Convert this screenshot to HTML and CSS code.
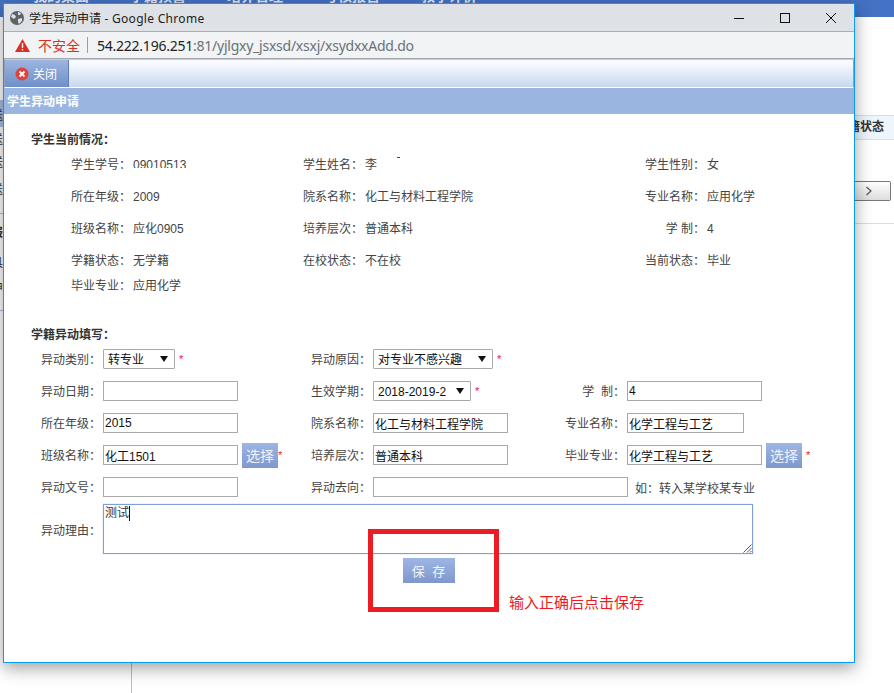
FILE: index.html
```html
<!DOCTYPE html>
<html lang="zh">
<head>
<meta charset="utf-8">
<title>学生异动申请</title>
<link rel="stylesheet" href="styles.css">
</head>
<body>
<div class="bg">
  <div class="bg-nav"><span>我的桌面</span><span>学籍预警</span><span>培养管理</span><span>考核报告</span><span>教学评价</span></div>
  <div class="bg-side"><b class="blk"></b><b class="ln1"></b><b class="ln2"></b><i class="s1">送</i><i class="s2">送</i><i class="s3">送</i><i class="s4">送</i><i class="s5">报</i><i class="s6">具</i><i class="s7">申</i></div>
  <div class="bg-head">籍状态</div>
  <div class="bg-pager"><svg width="8" height="10" viewBox="0 0 8 10"><path d="M1.500 1l4.500 4-4.500 4" fill="none" stroke="#555" stroke-width="1.200"/></svg></div>
  <div class="bg-line"></div>
</div>
<div class="win">
  <div class="title">
    <svg class="globe" width="16" height="16" viewBox="0 0 16 16"><circle cx="8" cy="8" r="7" fill="#5f6368"/><path d="M3 4l3 1 1 2-2 2-3-2zM9 2l3 1-1 2-2 0zM9 9l4-1 0 3-3 3-1-2z" fill="#dee1e6"/></svg>
    <span class="title-text">学生异动申请<span class="title-latin"> - Google Chrome</span></span>
    <svg class="winbtn" width="102" height="16" viewBox="0 0 102 16"><path d="M0 8.500h10" stroke="#111" fill="none"/><rect x="46.500" y="3.500" width="9" height="9" fill="none" stroke="#111"/><path d="M92 3l10 10M102 3L92 13" stroke="#111" fill="none"/></svg>
  </div>
  <div class="addr">
    <svg width="15" height="13" viewBox="0 0 15 13"><path d="M7.500 0L15 13H0z" fill="#d93025"/><path d="M6.800 4h1.400v5H6.800zM6.800 10h1.400v1.500H6.800z" fill="#fff"/></svg>
    <span class="unsafe">不安全</span><span class="sep"></span>
    <span class="url"><b>54.222.196.251</b>:81/yjlgxy_jsxsd/xsxj/xsydxxAdd.do</span>
  </div>
  <div class="toolbar">
    <div class="close-tab">
      <svg width="14" height="14" viewBox="0 0 14 14"><circle cx="7" cy="7" r="6.500" fill="#e2403a"/><path d="M4.500 4.500l5 5M9.500 4.500l-5 5" stroke="#fff" stroke-width="1.800"/></svg>
      <span>关闭</span>
    </div>
  </div>
  <div class="heading">学生异动申请</div>
  <div class="content">
    <div class="sec-title first">学生当前情况：</div>
    <div class="info">
      <div class="cell"><label>学生学号：</label><span class="clip">09010513</span></div>
      <div class="cell"><label>学生姓名：</label><span class="name">李<i class="mark"></i></span></div>
      <div class="cell"><label>学生性别：</label><span>女</span></div>
      <div class="cell"><label>所在年级：</label><span>2009</span></div>
      <div class="cell"><label>院系名称：</label><span>化工与材料工程学院</span></div>
      <div class="cell"><label>专业名称：</label><span>应用化学</span></div>
      <div class="cell"><label>班级名称：</label><span>应化0905</span></div>
      <div class="cell"><label>培养层次：</label><span>普通本科</span></div>
      <div class="cell"><label class="ra">学 制：</label><span>4</span></div>
      <div class="cell"><label>学籍状态：</label><span>无学籍</span></div>
      <div class="cell"><label>在校状态：</label><span>不在校</span></div>
      <div class="cell"><label>当前状态：</label><span>毕业</span></div>
    </div>
    <div class="cell last"><label>毕业专业：</label><span>应用化学</span></div>

    <div class="sec-title second">学籍异动填写：</div>
    <div class="form">
      <label>异动类别：</label>
      <div class="fld"><span class="sel w72">转专业<i></i></span><em>*</em></div>
      <label>异动原因：</label>
      <div class="fld"><span class="sel w120">对专业不感兴趣<i></i></span><em>*</em></div>
      <label></label><div class="fld"></div>

      <label>异动日期：</label>
      <div class="fld"><input class="inp" type="text" value=""></div>
      <label>生效学期：</label>
      <div class="fld"><span class="sel w98">2018-2019-2<i></i></span><em>*</em></div>
      <label>学&nbsp;&nbsp;制：</label>
      <div class="fld"><input class="inp" type="text" value="4"></div>

      <label>所在年级：</label>
      <div class="fld"><input class="inp" type="text" value="2015"></div>
      <label>院系名称：</label>
      <div class="fld"><input class="inp" type="text" value="化工与材料工程学院"></div>
      <label>专业名称：</label>
      <div class="fld"><input class="inp short" type="text" value="化学工程与工艺"></div>

      <label>班级名称：</label>
      <div class="fld"><input class="inp" type="text" value="化工1501"><button class="pick" type="button">选择</button><em class="tight">*</em></div>
      <label>培养层次：</label>
      <div class="fld"><input class="inp" type="text" value="普通本科"></div>
      <label>毕业专业：</label>
      <div class="fld"><input class="inp" type="text" value="化学工程与工艺"><button class="pick" type="button">选择</button><em>*</em></div>

      <label>异动文号：</label>
      <div class="fld"><input class="inp" type="text" value=""></div>
      <label>异动去向：</label>
      <div class="fld span3"><input class="inp wide" type="text" value=""><span class="hint">如：转入某学校某专业</span></div>
    </div>
    <div class="reason">
      <label>异动理由：</label>
      <div class="ta"><span>测试</span><i class="caret"></i>
        <svg class="grip" width="10" height="10" viewBox="0 0 10 10"><path d="M9.500 1.500l-8 8M9.500 5l-4.500 4.500M9.500 8l-1.500 1.500" stroke="#555" fill="none"/></svg>
      </div>
    </div>
    <div class="save-row"><button class="save" type="button">保 存</button></div>
  </div>
  <div class="redbox"></div>
  <div class="note">输入正确后点击保存</div>
</div>
</body>
</html>
```
FILE: styles.css
```css
* { box-sizing: border-box; }
html, body { margin: 0; padding: 0; width: 894px; height: 693px; overflow: hidden; background: #fff; }
body { position: relative; font-family: "Liberation Sans", "Noto Sans CJK SC", sans-serif; font-size: 12px; color: #333; }
.bg { position: absolute; inset: 0; }
.bg-nav { height: 17px; background: #4472c4; color: #dfe8f6; font-size: 14px; font-weight: bold; padding-left: 33px; display: flex; gap: 41px; overflow: hidden; }
.bg-nav span { display: block; height: 14px; line-height: 14px; margin-top: -11px; white-space: nowrap; }
.bg-side { position: absolute; left: 0; top: 100px; width: 3px; height: 220px; overflow: hidden; font-size: 12px; }
.bg-side b { position: absolute; left: 0; width: 3px; }
.blk { top: 0; height: 27px; background: #a9bfe3; }
.ln1 { top: 113px; height: 1px; background: #a9bfe3; }
.ln2 { top: 210px; height: 1px; background: #a9bfe3; }
.bg-side i { position: absolute; left: -9px; font-style: normal; line-height: 14px; }
.s1 { top: 9px; } .s2 { top: 33px; } .s3 { top: 56px; } .s4 { top: 83px; } .s5 { top: 126px; font-weight: bold; } .s6 { top: 156px; } .s7 { top: 181px; }
.bg-head { position: absolute; left: 855px; top: 115px; width: 39px; height: 25px; background: #eef6fd; border-top: 1px solid #cfe1f0; border-bottom: 1px solid #cfe1f0; font-size: 12px; font-weight: bold; line-height: 23px; color: #333; overflow: hidden; text-indent: -7px; white-space: nowrap; }
.bg-pager { position: absolute; left: 855px; top: 181px; width: 36px; height: 20px; border: 1px solid #777; border-left: 0; border-radius: 0 2px 2px 0; background: linear-gradient(#fff, #ddd); display: flex; align-items: center; justify-content: center; padding-right: 7px; }
.bg-line { position: absolute; left: 855px; top: 223px; width: 39px; height: 1px; background: #cfe1f0; }
.bg::after { content: ""; position: absolute; left: 131px; top: 663px; width: 1px; height: 30px; background: #a9bfe3; }
.win { position: absolute; left: 3px; top: 3px; width: 852px; height: 660px; background: #fff; border: 1px solid #0a9af0; box-shadow: 0 5px 16px rgba(0,0,0,.38); display: flex; flex-direction: column; }
.title { height: 28px; background: #dee1e6; border-bottom: 1px solid #abafb3; display: flex; align-items: center; padding-left: 5px; flex: none; }
.globe { margin-right: 4px; flex: none; }
.title-text { font-size: 12px; color: #222; font-family: "Noto Sans", "Noto Sans CJK SC", sans-serif; flex: 1; }
.title-latin { letter-spacing: .3px; }
.winbtn { margin-right: 18px; flex: none; }
.addr { height: 27px; background: #f1f3f5; border-bottom: 1px solid #a5a8ad; display: flex; align-items: center; padding-left: 11px; flex: none; }
.unsafe { color: #d93025; font-size: 14px; margin-left: 8px; }
.sep { width: 1px; height: 16px; background: #9a9ea3; margin: 0 9px 0 7px; }
.url { font-family: "Noto Sans", "Noto Sans CJK SC", sans-serif; font-size: 14px; color: #6a7278; letter-spacing: -.24px; }
.url b { font-weight: 400; color: #222; }
.toolbar { height: 29px; flex: none; background: linear-gradient(#f8faff 0 12%, #c7d8ec); border: 1px solid #8d9fc0; border-bottom: 1px solid #fff; border-top-color: #c4ccd8; }
.close-tab { width: 64px; height: 27px; background: linear-gradient(#9db5e0, #6f8fc8); display: flex; align-items: center; padding-left: 10px; gap: 4px; color: #fff; font-size: 12px; border-right: 1px solid #5f7fb5; }
.heading { height: 26px; flex: none; background: #9ab5e0; color: #fff; font-weight: bold; font-size: 12px; line-height: 28px; padding-left: 3px; }
.content { flex: 1; color: #444; }
.sec-title { font-weight: bold; color: #333; padding-left: 27px; font-size: 12px; line-height: 18px; }
.first { margin-top: 17px; }
.info { display: grid; grid-template-columns: 232px 342px 1fr; grid-auto-rows: 32px; padding-left: 67px; margin-top: -3px; height: 128px; }
.cell { display: flex; line-height: 16px; padding-top: 11px; height: 32px; }
.cell label { width: 62px; flex: none; }
.cell label.ra { text-align: right; padding-right: 2px; }
.clip { height: 11px; overflow: hidden; }
.name { position: relative; }
.mark { position: absolute; left: 32px; top: 0; width: 3px; height: 1px; background: #444; }
.last { padding-left: 67px; padding-top: 0; height: 17px; margin-top: 3px; padding-top: 1px; }
.second { margin-top: 32px; }
.form { display: grid; grid-template-columns: 99px 208px 62px 191px 63px 1fr; grid-auto-rows: 32px; margin-top: -1px; align-items: center; height: 160px; }
.form label { text-align: right; padding: 2px 2px 0 0; line-height: 20px; color: #444; white-space: nowrap; }
.fld { display: flex; align-items: center; height: 20px; }
.span3 { grid-column: span 3; }
.inp { width: 135px; height: 20px; border: 1px solid #a9a9a9; padding: 0 1px; font: 12px/16px "Liberation Sans", "Noto Sans CJK SC", sans-serif; color: #111; background: #fff; border-radius: 0; outline: 0; flex: none; }
.inp.short { width: 117px; }
.inp.wide { width: 255px; }
.hint { margin-left: 7px; color: #444; white-space: nowrap; }
.sel { position: relative; display: block; height: 20px; border: 1px solid #a9a9a9; border-radius: 1px; line-height: 20px; padding-left: 4px; color: #111; background: #fff; flex: none; }
.sel i { position: absolute; right: 6px; top: 6px; border: 4px solid transparent; border-top: 6px solid #111; border-bottom: 0; }
.w72 { width: 72px; } .w120 { width: 120px; } .w98 { width: 98px; }
em { color: #f01030; font-style: normal; font-size: 11px; margin-left: 4px; }
em.tight { margin-left: 0; }
.pick { width: 36px; height: 25px; margin-left: 4px; padding: 0; border: 0; background: linear-gradient(#9db6e4, #7f97cb); color: #eef3fb; font: 14px "Liberation Sans", "Noto Sans CJK SC", sans-serif; flex: none; }
.reason { display: flex; align-items: center; margin-top: 1px; }
.reason label { width: 99px; text-align: right; padding-right: 2px; color: #444; }
.ta { position: relative; width: 650px; height: 50px; border: 1px solid #7f9fdc; box-shadow: 0 0 1px #9fb8e8; padding: 1px; color: #333; line-height: 14px; font-size: 12px; background: #fff; }
.caret { display: inline-block; width: 1px; height: 15px; background: #111; vertical-align: top; }
.grip { position: absolute; right: 0; bottom: 0; }
.save-row { padding-left: 399px; margin-top: 4px; }
.save { width: 52px; height: 25px; border: 0; padding: 0; background: linear-gradient(#9db6e4, #7f97cb); color: #f0f4fc; font: 13px "Liberation Sans", "Noto Sans CJK SC", sans-serif; letter-spacing: 1px; word-spacing: 2px; }
.redbox { position: absolute; left: 364px; top: 525px; width: 131px; height: 83px; border: 5px solid #ed1c24; }
.note { position: absolute; left: 505px; top: 590px; font-size: 15px; line-height: 18px; color: #ed1c24; white-space: nowrap; }
```
